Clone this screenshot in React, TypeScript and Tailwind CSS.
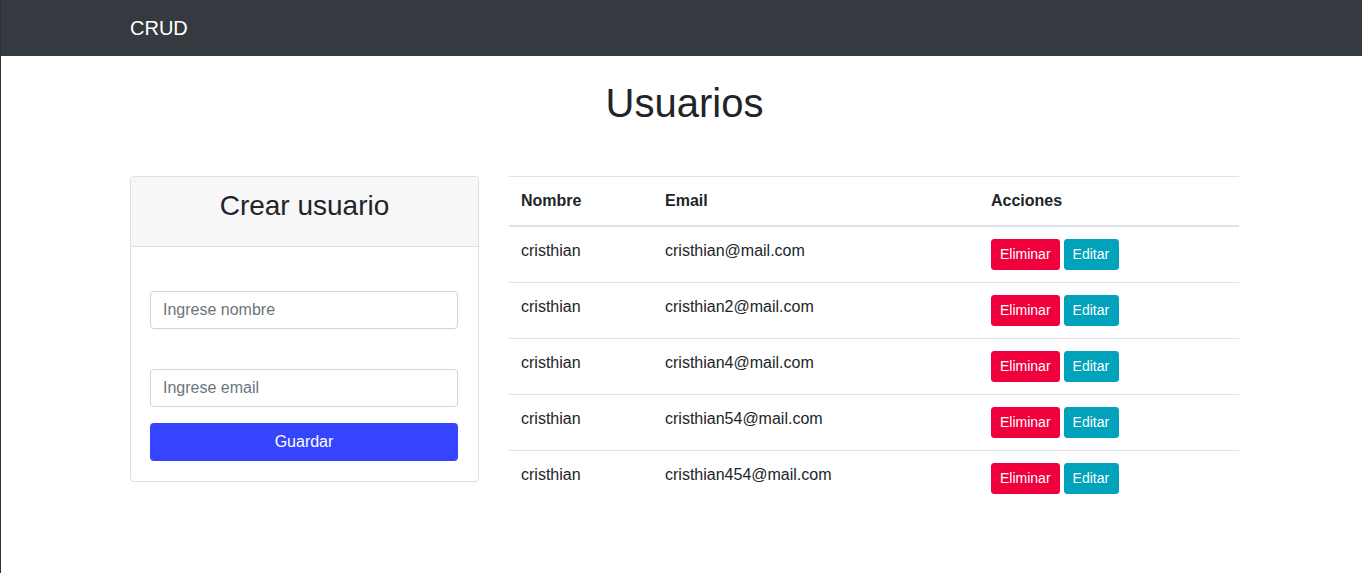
import React from 'react';

const USERS = [
  { nombre: 'cristhian', email: 'cristhian@mail.com' },
  { nombre: 'cristhian', email: 'cristhian2@mail.com' },
  { nombre: 'cristhian', email: 'cristhian4@mail.com' },
  { nombre: 'cristhian', email: 'cristhian54@mail.com' },
  { nombre: 'cristhian', email: 'cristhian454@mail.com' },
];

export default function App() {
  return (
    <div className="min-h-[573px] bg-white border-l border-[#2b3035] text-[#212529] font-['Liberation_Sans',Arial,sans-serif]">
      {/* Navbar */}
      <nav className="h-14 bg-[#343a40] flex items-center">
        <span className="ml-[129px] text-[20px] leading-[30px] text-white">CRUD</span>
      </nav>

      <main className="ml-[129px] w-[1109px]">
        <h1 className="mt-[23px] text-center text-[40px] leading-[48px] font-normal">Usuarios</h1>

        <div className="mt-[49px] flex items-start gap-[30px]">
          {/* Form card */}
          <div className="w-[349px] border border-[#dfdfdf] rounded-[4px] overflow-hidden">
            <div className="bg-[#f7f7f7] border-b border-[#dfdfdf] pt-3 pb-[23px] text-center">
              <h3 className="text-[28px] leading-[34px] font-normal">Crear usuario</h3>
            </div>
            <div className="pl-[19px] pr-5 pt-5 pb-5">
              <input
                type="text"
                placeholder="Ingrese nombre"
                className="mt-6 block w-full h-[38px] px-3 text-[16px] border border-[#ced4da] rounded-[4px] placeholder:text-[#6c757d] focus:outline-none"
              />
              <input
                type="text"
                placeholder="Ingrese email"
                className="mt-10 block w-full h-[38px] px-3 text-[16px] border border-[#ced4da] rounded-[4px] placeholder:text-[#6c757d] focus:outline-none"
              />
              <button
                type="button"
                className="mt-4 block w-full h-[38px] bg-[#3444ff] text-white text-[16px] rounded-[4px]"
              >
                Guardar
              </button>
            </div>
          </div>

          {/* Users table */}
          <table className="w-[730px] border-collapse table-fixed text-[16px] leading-6">
            <thead>
              <tr className="border-t border-b-2 border-[#dee2e6]">
                <th className="w-[144px] text-left font-bold px-3 py-3">Nombre</th>
                <th className="w-[326px] text-left font-bold px-3 py-3">Email</th>
                <th className="text-left font-bold px-3 py-3">Acciones</th>
              </tr>
            </thead>
            <tbody>
              {USERS.map((u, i) => (
                <tr key={u.email} className={i > 0 ? 'border-t border-[#dee2e6]' : ''}>
                  <td className="align-top p-3">{u.nombre}</td>
                  <td className="align-top p-3">{u.email}</td>
                  <td className="align-top p-3">
                    <div className="flex gap-1">
                      <button
                        type="button"
                        className="h-[31px] px-2 text-[14px] leading-[21px] text-white bg-[#f0003c] border border-[#f0003c] rounded-[3px]"
                      >
                        Eliminar
                      </button>
                      <button
                        type="button"
                        className="h-[31px] pl-2 pr-[9px] text-[14px] leading-[21px] text-white bg-[#00a3bb] border border-[#00a3bb] rounded-[3px]"
                      >
                        Editar
                      </button>
                    </div>
                  </td>
                </tr>
              ))}
            </tbody>
          </table>
        </div>
      </main>
    </div>
  );
}
